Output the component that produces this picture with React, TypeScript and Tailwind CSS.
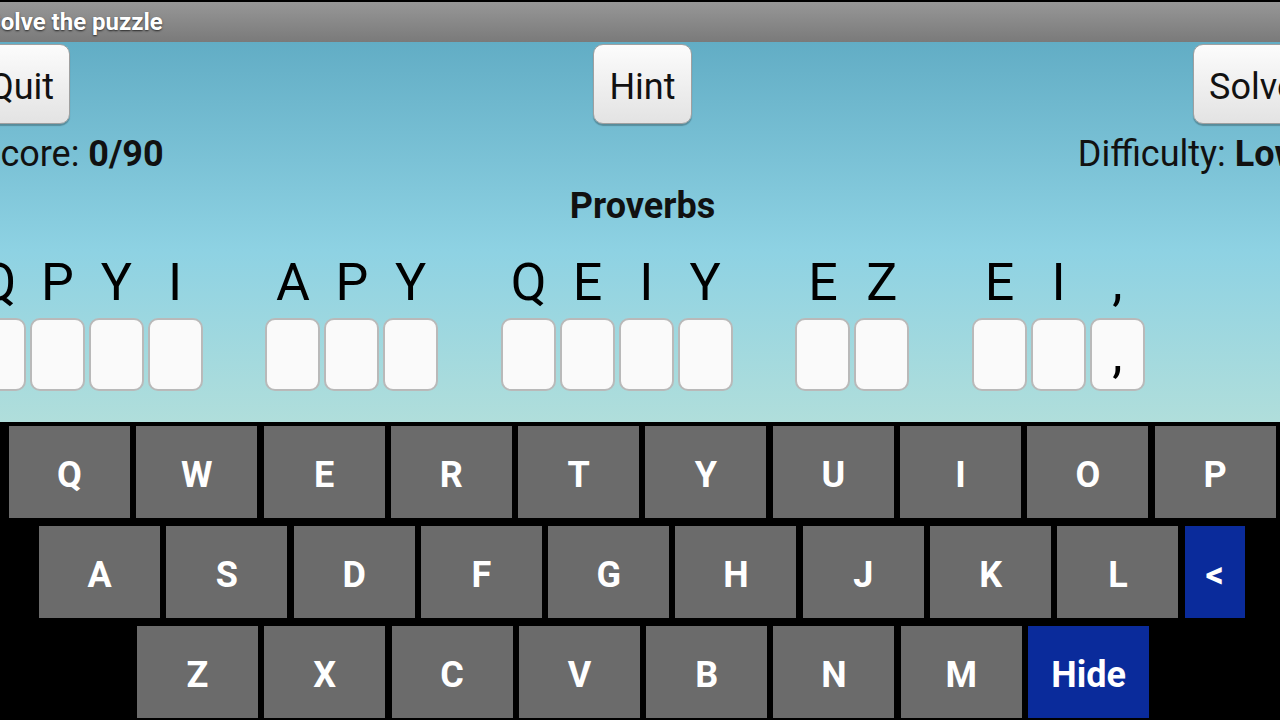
import React from "react";

const words = ["QPYI", "APY", "QEIY", "EZ", "EI,"];

const rows = [
  { pad: "pl-[9px]", keys: ["Q", "W", "E", "R", "T", "Y", "U", "I", "O", "P"] },
  { pad: "pl-[39px]", keys: ["A", "S", "D", "F", "G", "H", "J", "K", "L"] },
  { pad: "pl-[137px]", keys: ["Z", "X", "C", "V", "B", "N", "M"] },
];

const isPunct = (c: string) => !/[A-Z]/.test(c);

function Cell({ ch }: { ch: string }) {
  return (
    <div className="flex w-[55px] flex-col items-center">
      <span className="h-[52px] text-[52px] leading-[52px] text-black">{ch}</span>
      <div className="mt-[9px] flex h-[73px] w-[55px] justify-center rounded-[10px] border-[2.5px] border-[#b9b9b9] bg-[#fafafa] pt-[9px]">
        {isPunct(ch) && <span className="text-[52px] leading-[52px] text-black">{ch}</span>}
      </div>
    </div>
  );
}

function TopButton({ label, className }: { label: string; className?: string }) {
  return (
    <button
      className={`h-[80px] rounded-[10px] border border-[#a0a0a0] bg-gradient-to-b from-[#fcfcfc] to-[#e3e3e3] px-[15px] pt-[5px] text-[36px] text-[#111] shadow-[0_2px_1px_rgba(0,0,0,0.25)] ${className ?? ""}`}
    >
      {label}
    </button>
  );
}

function Key({ label, blue, wide = true }: { label: string; blue?: boolean; wide?: boolean }) {
  return (
    <div
      className={`flex h-[92px] items-center justify-center pt-[5px] text-[36px] font-bold text-white ${
        wide ? "w-[121px]" : "w-[60px]"
      } ${blue ? "bg-[#0a2b9b]" : "bg-[#6b6b6b]"}`}
    >
      {label}
    </div>
  );
}

export default function App() {
  return (
    <div className="flex h-[720px] w-[1280px] flex-col overflow-hidden bg-black font-['Roboto',sans-serif]">
      {/* title bar */}
      <div className="flex h-[42px] shrink-0 items-center border-t-2 border-black bg-gradient-to-b from-[#979797] to-[#7a7a7a]">
        <span className="ml-[-14px] text-[24px] font-bold text-white [text-shadow:0_1px_2px_rgba(0,0,0,0.7)]">
          Solve the puzzle
        </span>
      </div>

      {/* puzzle area */}
      <div className="h-[380px] shrink-0 bg-[linear-gradient(to_bottom,#62adc5_0%,#8ed2e3_55%,#b0dedb_100%)]">
        <div className="ml-[-27px] w-[1339px]">
          <div className="mt-[2px] grid grid-cols-3 items-center">
            <TopButton label="Quit" className="justify-self-start" />
            <TopButton label="Hint" className="justify-self-center" />
            <TopButton label="Solve" className="justify-self-end" />
          </div>

          <div className="mt-[9px] flex justify-between pl-[6px] text-[36px] leading-[42px] text-[#111]">
            <span>
              Score: <b>0/90</b>
            </span>
            <span className="mr-[11px]">
              Difficulty: <b>Low</b>
            </span>
          </div>

          <div className="mt-[10px] text-center text-[36px] font-bold leading-[42px] text-[#111]">Proverbs</div>

          <div className="ml-[-2px] mt-[30px] flex gap-[3.9px]">
            {words.map((w, wi) => (
              <React.Fragment key={wi}>
                {wi > 0 && <div className="w-[55px]" />}
                {w.split("").map((c, ci) => (
                  <Cell key={ci} ch={c} />
                ))}
              </React.Fragment>
            ))}
          </div>
        </div>
      </div>

      {/* keyboard */}
      <div className="flex flex-1 flex-col gap-[8px] bg-black pt-[4px]">
        {rows.map((r, i) => (
          <div key={i} className={`flex gap-[6.3px] ${r.pad}`}>
            {r.keys.map((k) => (
              <Key key={k} label={k} />
            ))}
            {i === 1 && <Key label="<" blue wide={false} />}
            {i === 2 && <Key label="Hide" blue />}
          </div>
        ))}
      </div>
    </div>
  );
}
